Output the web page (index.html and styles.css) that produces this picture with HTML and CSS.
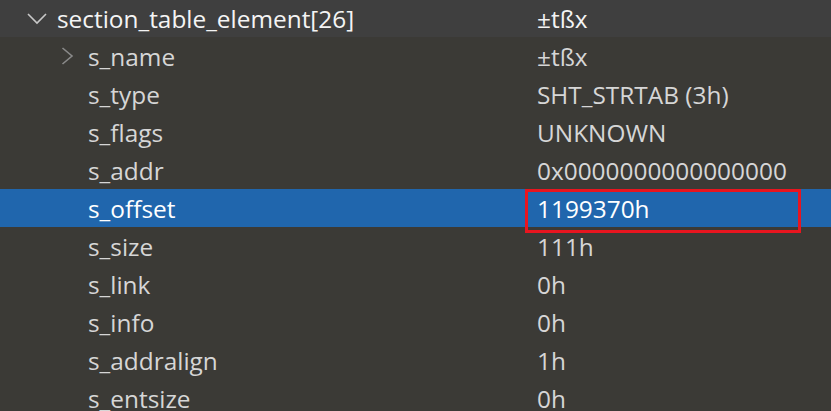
FILE: index.html
```html
<!DOCTYPE html>
<html>
<head>
<meta charset="utf-8">
<link rel="stylesheet" href="styles.css">
</head>
<body>
<div class="tree">
  <div class="row head">
    <div class="name">
      <svg class="chev-down" width="20" height="12" viewBox="0 0 20 12"><polyline points="1,1 10,10 19,1" fill="none" stroke="#c8c8c8" stroke-width="1.6"/></svg>
      <span>section_table_element[26]</span>
    </div>
    <div class="value">±tßx</div>
  </div>
  <div class="row child">
    <div class="name">
      <svg class="chev-right" width="13" height="18" viewBox="0 0 13 18"><polyline points="1.5,1 11,9 1.5,17" fill="none" stroke="#8a8a8a" stroke-width="1.6"/></svg>
      <span>s_name</span>
    </div>
    <div class="value">±tßx</div>
  </div>
  <div class="row child"><div class="name"><span class="pad"></span><span>s_type</span></div><div class="value">SHT_STRTAB (3h)</div></div>
  <div class="row child"><div class="name"><span class="pad"></span><span>s_flags</span></div><div class="value">UNKNOWN</div></div>
  <div class="row child"><div class="name"><span class="pad"></span><span>s_addr</span></div><div class="value">0x0000000000000000</div></div>
  <div class="row child selected"><div class="name"><span class="pad"></span><span>s_offset</span></div><div class="value">1199370h</div><div class="mark"></div></div>
  <div class="row child"><div class="name"><span class="pad"></span><span>s_size</span></div><div class="value">111h</div></div>
  <div class="row child"><div class="name"><span class="pad"></span><span>s_link</span></div><div class="value">0h</div></div>
  <div class="row child"><div class="name"><span class="pad"></span><span>s_info</span></div><div class="value">0h</div></div>
  <div class="row child"><div class="name"><span class="pad"></span><span>s_addralign</span></div><div class="value">1h</div></div>
  <div class="row child"><div class="name"><span class="pad"></span><span>s_entsize</span></div><div class="value">0h</div></div>
</div>
</body>
</html>
```

FILE: styles.css
```css
html, body {
  margin: 0;
  padding: 0;
  background: #3b3a36;
  overflow: hidden;
}
.tree {
  width: 831px;
  height: 411px;
  font-family: "Open Sans", "Noto Sans", sans-serif;
  font-size: 24.4px;
  color: #d6d6d6;
}
.row {
  display: grid;
  grid-template-columns: 537px 1fr;
  align-items: center;
  height: 38px;
  position: relative;
}
.row.head {
  height: 37px;
  background: #3f3f3f;
  color: #f4f4f4;
}
.name {
  display: flex;
  align-items: center;
}
.head .name {
  padding-left: 27px;
  gap: 10px;
}
.child .name {
  padding-left: 61px;
  gap: 14px;
}
.pad {
  display: inline-block;
  width: 13px;
  height: 1px;
}
.chev-down, .chev-right {
  flex: none;
}
.row.selected {
  background: #2066ad;
  color: #ffffff;
}
.mark {
  position: absolute;
  left: 525px;
  top: 0;
  width: 270px;
  height: 38px;
  border: 3px solid #e8151f;
}
```
